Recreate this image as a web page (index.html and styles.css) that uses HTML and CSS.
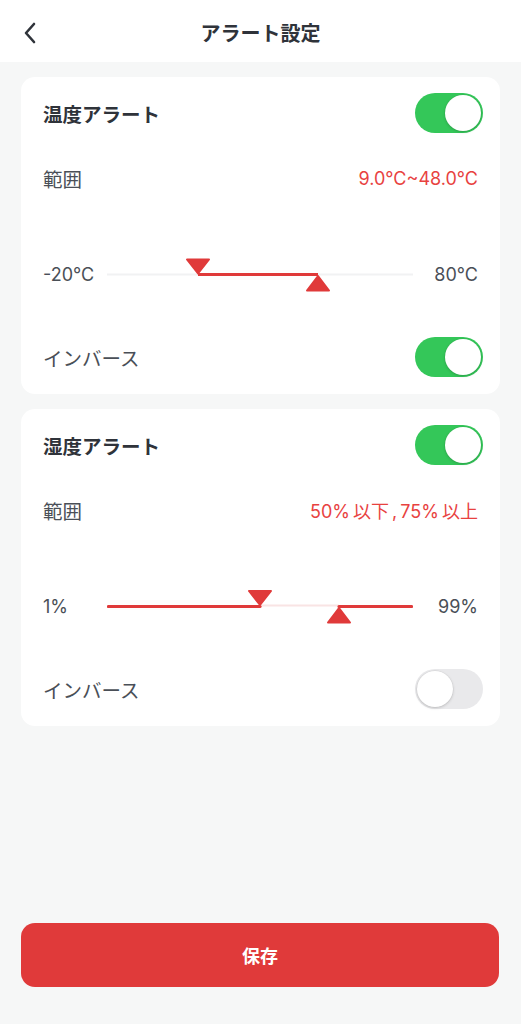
FILE: index.html
```html
<!DOCTYPE html>
<html lang="ja">
<head>
<meta charset="utf-8">
<link rel="stylesheet" href="styles.css">
</head>
<body>
<div class="page">
  <header class="topbar">
    <span class="back">
      <svg width="14" height="22" viewBox="0 0 14 22"><path d="M11 2 L3 11 L11 20" fill="none" stroke="#2f333a" stroke-width="2.6" stroke-linecap="round" stroke-linejoin="round"/></svg>
    </span>
    <h1 class="title">アラート設定</h1>
  </header>

  <main class="content">
    <section class="card">
      <div class="row head">
        <span class="card-title">温度アラート</span>
        <span class="switch on"><span class="knob"></span></span>
      </div>
      <div class="row range">
        <span class="label">範囲</span>
        <span class="value">9.0°C~48.0°C</span>
      </div>
      <div class="row slider">
        <span class="end">-20°C</span>
        <svg class="track" width="306" height="40" viewBox="0 0 306 40">
          <line x1="0" y1="20.5" x2="306" y2="20.5" stroke="#f1f2f3" stroke-width="2"/>
          <line x1="91" y1="20.5" x2="211" y2="20.5" stroke="#e03a3a" stroke-width="3.2"/>
          <path d="M80 5.5 L102 5.5 L91 19.5 Z" fill="#e03a3a" stroke="#e03a3a" stroke-width="2" stroke-linejoin="round"/>
          <path d="M211 22 L222 36.5 L200 36.5 Z" fill="#e03a3a" stroke="#e03a3a" stroke-width="2" stroke-linejoin="round"/>
        </svg>
        <span class="end">80°C</span>
      </div>
      <div class="row inverse">
        <span class="label">インバース</span>
        <span class="switch on"><span class="knob"></span></span>
      </div>
    </section>

    <section class="card">
      <div class="row head">
        <span class="card-title">湿度アラート</span>
        <span class="switch on"><span class="knob"></span></span>
      </div>
      <div class="row range">
        <span class="label">範囲</span>
        <span class="value">50% 以下 , 75% 以上</span>
      </div>
      <div class="row slider">
        <span class="end">1%</span>
        <svg class="track" width="306" height="40" viewBox="0 0 306 40">
          <line x1="153" y1="19.5" x2="232" y2="19.5" stroke="#f9e4e4" stroke-width="2"/>
          <line x1="1.5" y1="20.5" x2="153" y2="20.5" stroke="#e03a3a" stroke-width="3.2" stroke-linecap="round"/>
          <line x1="232" y1="20.5" x2="304.5" y2="20.5" stroke="#e03a3a" stroke-width="3.2" stroke-linecap="round"/>
          <path d="M142 5 L164 5 L153 19 Z" fill="#e03a3a" stroke="#e03a3a" stroke-width="2" stroke-linejoin="round"/>
          <path d="M232 22 L243 36.5 L221 36.5 Z" fill="#e03a3a" stroke="#e03a3a" stroke-width="2" stroke-linejoin="round"/>
        </svg>
        <span class="end">99%</span>
      </div>
      <div class="row inverse">
        <span class="label">インバース</span>
        <span class="switch off"><span class="knob"></span></span>
      </div>
    </section>
  </main>

  <footer class="footer">
    <button class="save">保存</button>
  </footer>
</div>
</body>
</html>
```

FILE: styles.css
```css
* { box-sizing: border-box; }
html, body { margin: 0; padding: 0; }
body {
  background: #f6f7f7;
  font-family: Inter, "Noto Sans CJK JP", sans-serif;
  color: #333840;
}
.page {
  height: 1024px;
  display: flex;
  flex-direction: column;
}
.topbar {
  height: 62px;
  background: #ffffff;
  display: flex;
  align-items: center;
  justify-content: center;
  position: relative;
}
.back {
  position: absolute;
  left: 23px;
  top: 22px;
  display: flex;
}
.title {
  margin: 0;
  font-size: 20px;
  font-weight: 700;
  color: #2f333a;
  padding-top: 3px;
}
.content {
  padding: 15px 21px 0 21px;
  display: flex;
  flex-direction: column;
  gap: 15px;
}
.card {
  background: #ffffff;
  border-radius: 14px;
  padding: 16px 17px 17px 22px;
  display: flex;
  flex-direction: column;
}
.row {
  display: flex;
  align-items: center;
  justify-content: space-between;
}
.head { height: 40px; }
.card-title {
  font-size: 19.5px;
  font-weight: 700;
  color: #2f333a;
}
.range { height: 24px; margin-top: 33px; padding-right: 5px; }
.label {
  font-size: 19.5px;
  color: #4a4f57;
}
.value {
  font-size: 18px;
  color: #e8423f;
  word-spacing: -2px;
}
.slider { height: 40px; margin-top: 64px; padding-right: 5px; }
.end {
  font-size: 18px;
  color: #4a4f57;
  width: 64px;
}
.end:last-child { text-align: right; width: 65px; }
.track { display: block; }
.inverse { height: 40px; margin-top: 43px; }
.switch {
  width: 68px;
  height: 40px;
  border-radius: 20px;
  padding: 2px;
  display: flex;
}
.switch.on {
  background: #34c759;
  justify-content: flex-end;
}
.switch.off {
  background: #e9e9eb;
  justify-content: flex-start;
}
.knob {
  width: 36px;
  height: 36px;
  border-radius: 50%;
  background: #ffffff;
  box-shadow: 0 1px 3px rgba(0,0,0,0.18), 0 0 0 0.5px rgba(0,0,0,0.06);
}
.footer {
  margin-top: auto;
  padding: 0 22px 37px 21px;
}
.save {
  width: 100%;
  height: 64px;
  border: none;
  border-radius: 14px;
  background: #e03a3a;
  color: #ffffff;
  font-family: "Noto Sans CJK JP", sans-serif;
  font-size: 18px;
  font-weight: 700;
}
```
